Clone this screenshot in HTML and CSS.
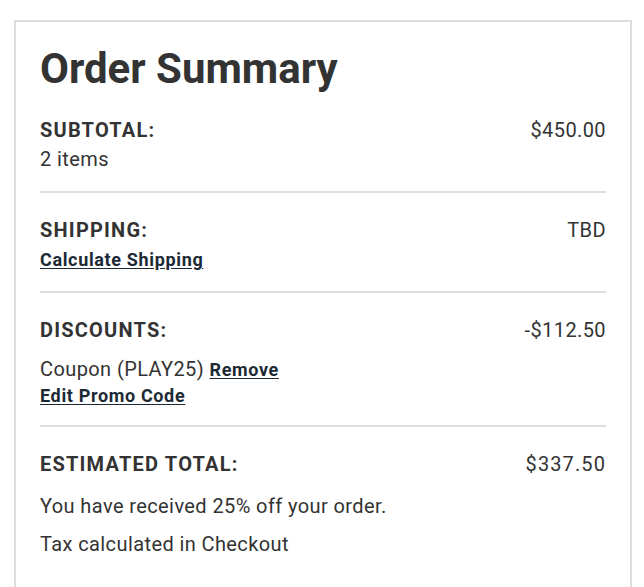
FILE: index.html
```html
<!DOCTYPE html>
<html lang="en">
<head>
<meta charset="utf-8">
<title>Order Summary</title>
<link rel="stylesheet" href="styles.css">
</head>
<body>
<section class="summary">
  <h1 class="title">Order Summary</h1>

  <div class="block block-first">
    <div class="row">
      <span class="label">SUBTOTAL:</span>
      <span class="value">$450.00</span>
    </div>
    <p class="line line-items">2 items</p>
  </div>

  <div class="block block-shipping">
    <div class="row">
      <span class="label">SHIPPING:</span>
      <span class="value">TBD</span>
    </div>
    <p class="line line-link line-calc"><a class="link" href="#">Calculate Shipping</a></p>
  </div>

  <div class="block block-discounts">
    <div class="row">
      <span class="label">DISCOUNTS:</span>
      <span class="value">-$112.50</span>
    </div>
    <p class="line line-coupon">Coupon (PLAY25) <a class="link" href="#">Remove</a></p>
    <p class="line line-link line-edit"><a class="link" href="#">Edit Promo Code</a></p>
  </div>

  <div class="block block-last">
    <div class="row">
      <span class="label">ESTIMATED TOTAL:</span>
      <span class="value value-total">$337.50</span>
    </div>
    <p class="line line-note">You have received 25% off your order.</p>
    <p class="line line-note2">Tax calculated in Checkout</p>
  </div>
</section>
</body>
</html>
```

FILE: styles.css
```css
html, body {
  margin: 0;
  padding: 0;
  background: #fff;
}

body {
  font-family: Roboto, "Liberation Sans", Arial, sans-serif;
  color: #333;
  padding: 20px 12px 0 14px;
}

.summary {
  border: 2px solid #ddd;
  border-bottom: none;
  padding: 22px 24px 40px 24px;
  min-height: 580px;
  box-sizing: border-box;
}

.title {
  margin: 0;
  font-size: 42px;
  line-height: 50px;
  font-weight: 700;
  color: #333;
}

.block {
  border-bottom: 2px solid #ddd;
}

.block-first {
  padding: 24px 0 20px;
}

.block-shipping {
  padding: 25px 0 19px;
}

.block-discounts {
  padding: 25px 0 17px;
}

.block-last {
  padding: 25px 0 0;
  border-bottom: none;
}

.row {
  display: flex;
  justify-content: space-between;
  align-items: baseline;
}

.label {
  font-size: 20px;
  line-height: 24px;
  font-weight: 700;
  letter-spacing: 1.2px;
}

.value {
  font-size: 20px;
  line-height: 24px;
  letter-spacing: 0.4px;
}

.value-total {
  letter-spacing: 1.1px;
}

.line {
  margin: 0;
  font-size: 20px;
  line-height: 24px;
  letter-spacing: 0.4px;
}

.line-link {
  font-size: 18px;
}

.line-items {
  margin-top: 5px;
}

.line-calc {
  margin-top: 6px;
}

.line-coupon {
  margin-top: 15px;
}

.line-edit {
  margin-top: 2px;
}

.line-note {
  margin-top: 18px;
}

.line-note2 {
  margin-top: 14px;
}

.link {
  font-size: 18px;
  font-weight: 700;
  letter-spacing: 0.65px;
  color: #1c2a35;
  text-decoration: underline;
  text-underline-offset: 2px;
}
```
